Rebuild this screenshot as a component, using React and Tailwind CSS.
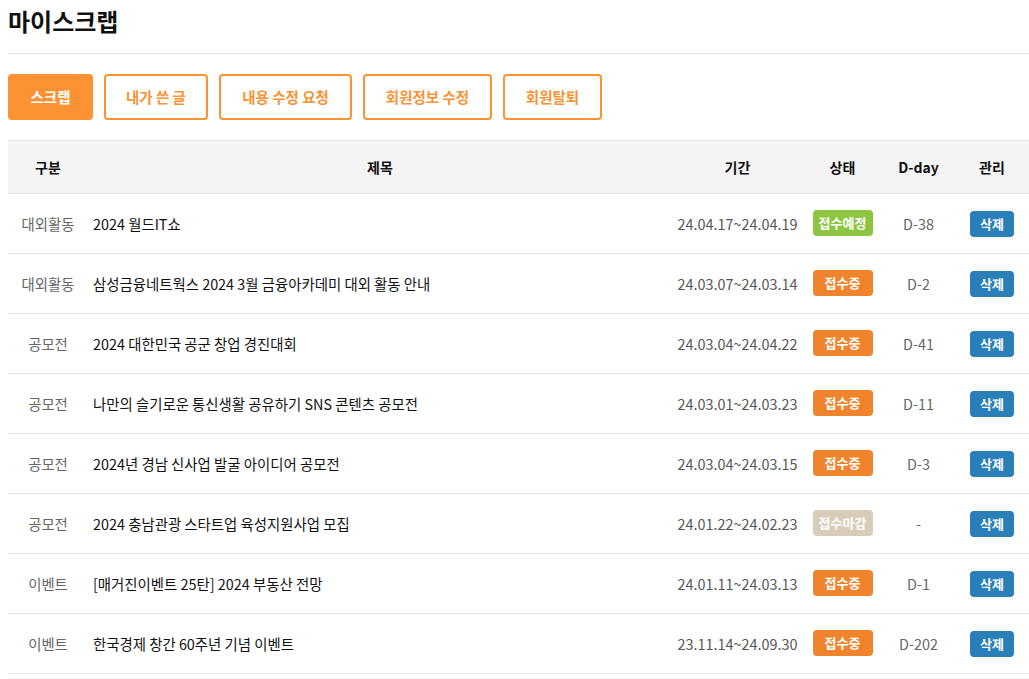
const tabs = [
  { label: '스크랩', w: 'w-[85px]', active: true },
  { label: '내가 쓴 글', w: 'w-[104px]' },
  { label: '내용 수정 요청', w: 'w-[133px]' },
  { label: '회원정보 수정', w: 'w-[129px]' },
  { label: '회원탈퇴', w: 'w-[99px]' },
];

const rows = [
  { cat: '대외활동', title: '2024 월드IT쇼', period: '24.04.17~24.04.19', status: '접수예정', dday: 'D-38' },
  { cat: '대외활동', title: '삼성금융네트웍스 2024 3월 금융아카데미 대외 활동 안내', period: '24.03.07~24.03.14', status: '접수중', dday: 'D-2' },
  { cat: '공모전', title: '2024 대한민국 공군 창업 경진대회', period: '24.03.04~24.04.22', status: '접수중', dday: 'D-41' },
  { cat: '공모전', title: '나만의 슬기로운 통신생활 공유하기 SNS 콘텐츠 공모전', period: '24.03.01~24.03.23', status: '접수중', dday: 'D-11' },
  { cat: '공모전', title: '2024년 경남 신사업 발굴 아이디어 공모전', period: '24.03.04~24.03.15', status: '접수중', dday: 'D-3' },
  { cat: '공모전', title: '2024 충남관광 스타트업 육성지원사업 모집', period: '24.01.22~24.02.23', status: '접수마감', dday: '-' },
  { cat: '이벤트', title: '[매거진이벤트 25탄] 2024 부동산 전망', period: '24.01.11~24.03.13', status: '접수중', dday: 'D-1' },
  { cat: '이벤트', title: '한국경제 창간 60주년 기념 이벤트', period: '23.11.14~24.09.30', status: '접수중', dday: 'D-202' },
];

const statusColor = {
  '접수예정': 'bg-[#8cc540]',
  '접수중': 'bg-[#f0842c]',
  '접수마감': 'bg-[#d9cdba]',
};

const StatusBadge = ({ status }) => (
  <span className={`inline-flex items-center justify-center w-[60px] h-[26px] rounded-[4px] text-white text-[13px] font-bold -translate-y-[1px] ${statusColor[status]}`}>
    {status}
  </span>
);

export default function App() {
  return (
    <div className="bg-white min-h-screen pl-2 font-['Noto_Sans_CJK_KR','Noto_Sans',sans-serif] text-[#222]">
      <div className="h-[54px] pt-[5px] border-b border-[#e4e4e4]">
        <h1 className="text-[24px] leading-[32px] font-bold text-[#111]">마이스크랩</h1>
      </div>

      {/* tab buttons */}
      <div className="flex gap-[11px] mt-[20px]">
        {tabs.map(t => (
          <button
            key={t.label}
            className={`${t.w} h-[46px] rounded-[4px] border-2 border-[#fb9234] text-[14.5px] font-bold ${t.active ? 'bg-[#fb9234] text-white' : 'bg-white text-[#fb9234]'}`}
          >
            {t.label}
          </button>
        ))}
      </div>

      <table className="mt-[20px] w-[1021px] table-fixed border-collapse">
        <colgroup>
          <col className="w-[80px]" />
          <col className="w-[584px]" />
          <col className="w-[131px]" />
          <col className="w-[79px]" />
          <col className="w-[73px]" />
          <col className="w-[74px]" />
        </colgroup>
        <thead>
          <tr className="h-[53px] bg-[#f4f4f4] border-y border-[#e4e4e4] text-[14px] font-bold text-[#111]">
            <th>구분</th>
            <th>제목</th>
            <th>기간</th>
            <th>상태</th>
            <th>D-day</th>
            <th>관리</th>
          </tr>
        </thead>
        <tbody>
          {rows.map((r, i) => (
            <tr key={i} className="h-[60px] border-b border-[#e4e4e4] text-[14.4px]">
              <td className="text-center text-[#666]">{r.cat}</td>
              <td className="pl-[5px] text-[#111]">{r.title}</td>
              <td className="text-center text-[#555]">{r.period}</td>
              <td className="text-center"><StatusBadge status={r.status} /></td>
              <td className="text-center text-[#666]">{r.dday}</td>
              <td className="text-center">
                <button className="w-[44px] h-[26px] rounded-[4px] bg-[#2a7fb8] text-white text-[13px] font-bold">삭제</button>
              </td>
            </tr>
          ))}
        </tbody>
      </table>
    </div>
  );
}
